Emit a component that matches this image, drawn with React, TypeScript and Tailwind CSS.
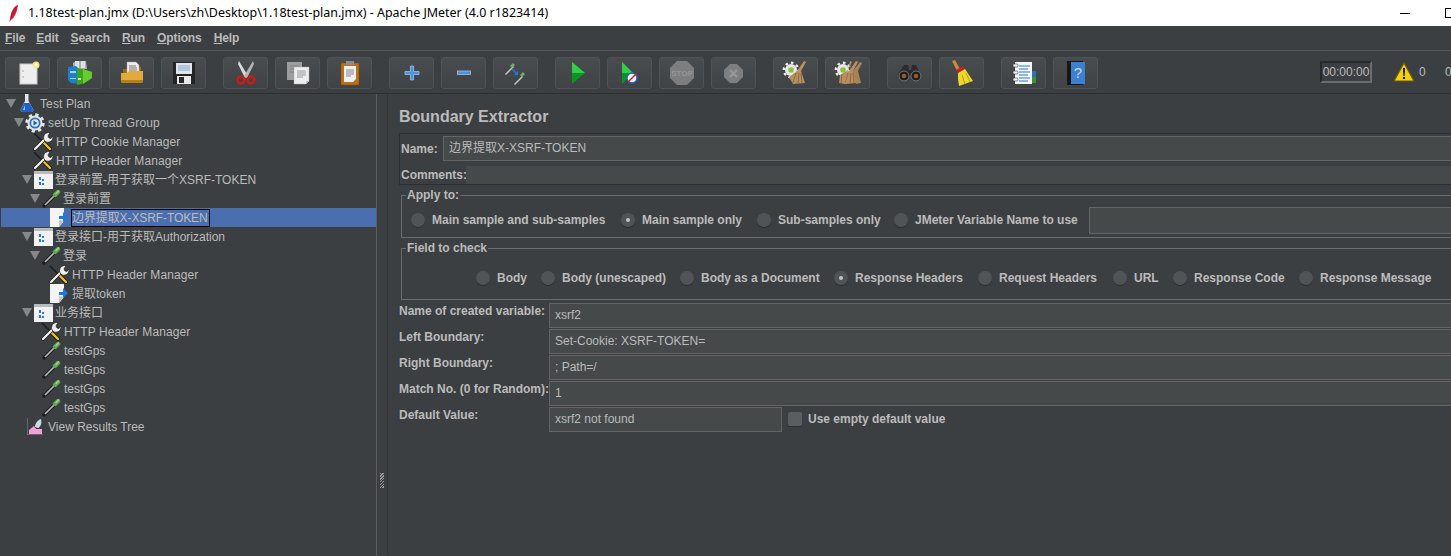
import React from 'react';

const FONT = "font-['Liberation_Sans','Noto_Sans_CJK_SC',sans-serif]";

// ---------- toolbar icons ----------
const NewIcon = () => (
  <svg width="24" height="24" viewBox="0 0 24 24">
    <rect x="4" y="3" width="17" height="20" fill="#eeeeee" stroke="#c9c9c9" />
    <circle cx="7" cy="10" r="0.8" fill="#999" />
    <circle cx="7" cy="16" r="0.8" fill="#999" />
    <circle cx="20" cy="4" r="3.500" fill="#f4e58a" />
    <circle cx="20" cy="4" r="1.800" fill="#fff8d0" />
  </svg>
);

const TemplatesIcon = () => (
  <svg width="26" height="26" viewBox="0 0 26 26">
    <path d="M6 3l3-2h10l1 8H6z" fill="#aab0b3" />
    <path d="M8 1h4v7H8zM14 1h4v7h-4z" fill="#dfe2e3" />
    <path d="M1 7l8-1 3 3v15l-8-1-3-3z" fill="#1f7fc4" />
    <path d="M3 11h6v2H3zM3 18h6v1H3z" fill="#9ad0f0" />
    <path d="M10 8l5 1 10 3-1 6-9 6-5 1z" fill="#3fa31c" />
    <path d="M16 9l9 3v6l-9 6z" fill="#66cc2e" />
    <path d="M11 18h3v2h-3z" fill="#c4e8a8" />
  </svg>
);

const OpenIcon = () => (
  <svg width="24" height="24" viewBox="0 0 24 24">
    <path d="M3 8h5l1-2h12v14H3z" fill="#9a6a10" />
    <path d="M7 1h9l3 3v10H7z" fill="#ececec" stroke="#aaa" strokeWidth="0.5" />
    <path d="M9 5h7M9 7h8M9 9h8" stroke="#777" />
    <path d="M1 12h6l2-2h14v10a2 2 0 0 1-2 2H3a2 2 0 0 1-2-2z" fill="#e3a93a" />
    <path d="M1 19h22v1a2 2 0 0 1-2 2H3a2 2 0 0 1-2-2z" fill="#b87f16" />
  </svg>
);

const SaveIcon = () => (
  <svg width="24" height="24" viewBox="0 0 24 24">
    <path d="M1 1h22v22H1z" fill="#242424" />
    <rect x="4" y="2" width="16" height="11" fill="#dfe6ef" />
    <path d="M6 5h12M6 7h12M6 9h12" stroke="#8ea7c4" />
    <rect x="5" y="15" width="14" height="8" fill="#e8e8e8" />
    <rect x="7" y="16" width="5" height="6" fill="#2a2a2a" />
  </svg>
);

const CutIcon = () => (
  <svg width="24" height="26" viewBox="0 0 24 26">
    <path d="M5 1l9 15-3 2L4 4z" fill="#dcdcdc" />
    <path d="M19 1l-9 15 3 2 7-14z" fill="#b5b5b5" />
    <circle cx="7" cy="20" r="3.500" fill="none" stroke="#d01818" strokeWidth="2.400" />
    <circle cx="17" cy="20" r="3.500" fill="none" stroke="#d01818" strokeWidth="2.400" />
  </svg>
);

const CopyIcon = () => (
  <svg width="24" height="24" viewBox="0 0 24 24">
    <rect x="1" y="1" width="15" height="18" fill="#9b9d9e" />
    <path d="M4 5h9M4 8h9M4 11h9" stroke="#808283" />
    <path d="M8 6h15v14l-3 3H8z" fill="#eeeeee" stroke="#a8a8a8" strokeWidth="0.5" />
    <path d="M11 10h9M11 12h9M11 14h9M11 16h6" stroke="#999" />
    <path d="M20 23v-3h3z" fill="#bbb" />
  </svg>
);

const PasteIcon = () => (
  <svg width="24" height="26" viewBox="0 0 24 26">
    <rect x="3" y="3" width="18" height="22" fill="#b8711a" stroke="#7d4a0c" strokeWidth="0.5" />
    <path d="M6 6h12v13l-3 3H6z" fill="#f0f0f0" />
    <path d="M8 10h8M8 12h8M8 14h8M8 16h5" stroke="#888" />
    <rect x="8" y="1" width="8" height="4" fill="#8c8c8c" />
  </svg>
);

const PlusIcon = () => (
  <svg width="16" height="16" viewBox="0 0 16 16">
    <path d="M6.500 1h3v5.500H15v3H9.500V15h-3V9.500H1v-3h5.500z" fill="#4a90dc" stroke="#a9cdf2" strokeWidth="0.7" />
  </svg>
);

const MinusIcon = () => (
  <svg width="16" height="16" viewBox="0 0 16 16">
    <rect x="1.500" y="6" width="13" height="3.500" fill="#4a90dc" stroke="#a9cdf2" strokeWidth="0.7" />
  </svg>
);

const ToggleIcon = () => (
  <svg width="24" height="24" viewBox="0 0 24 24">
    <path d="M1 13l8-8 1 1-8 8z" fill="#c9c9c9" />
    <path d="M6 5l3-3 2 2-3 3z" fill="#6bb35a" />
    <path d="M11 24l-1-1 8-8 1 1z" fill="#c9c9c9" />
    <path d="M16 14l3-3 2 2-3 3z" fill="#6bb35a" />
    <path d="M8 8l5 5" stroke="#1d78e0" strokeWidth="1.500" />
    <path d="M14 10v4h-4z" fill="#1d78e0" />
  </svg>
);

const RunIcon = () => (
  <svg width="14" height="22" viewBox="0 0 14 22">
    <path d="M1 0l13 11L1 22z" fill="#0c9420" />
    <path d="M1 0l13 11H1z" fill="#2fd048" />
  </svg>
);

const RunNoPauseIcon = () => (
  <svg width="16" height="22" viewBox="0 0 16 22">
    <path d="M0 0l11 11L0 22z" fill="#0c9420" />
    <path d="M0 0l11 11H0z" fill="#2fd048" />
    <circle cx="10" cy="16" r="5" fill="#f4f4f4" stroke="#1c62c6" strokeWidth="1.300" />
    <path d="M6 20l8-8" stroke="#d02020" strokeWidth="1.500" />
  </svg>
);

const StopIcon = () => (
  <svg width="24" height="24" viewBox="0 0 24 24">
    <path d="M7 0h10l7 7v10l-7 7H7l-7-7V7z" fill="#7c7e7f" />
    <text x="12" y="15" textAnchor="middle" fontSize="8" fontWeight="700" fill="#949697" fontFamily="Liberation Sans, sans-serif">STOP</text>
  </svg>
);

const ShutdownIcon = () => (
  <svg width="19" height="19" viewBox="0 0 19 19">
    <path d="M6 0h7l6 6v7l-6 6H6l-6-6V6z" fill="#7c7e7f" />
    <path d="M6 6l7 7M13 6l-7 7" stroke="#979999" strokeWidth="2.400" />
  </svg>
);

const ClearIcon = ({ all }: { all?: boolean }) => (
  <svg width="28" height="26" viewBox="0 0 28 26">
    <circle cx="9" cy="10" r="6" fill="#e8e8e8" />
    <circle cx="9" cy="10" r="7.200" fill="none" stroke="#e8e8e8" strokeWidth="2.400" strokeDasharray="2.600 3" />
    <circle cx="9" cy="10" r="2.800" fill="#86c440" />
    <path d="M22 1l2 1-5 9 4 12-12 1-4-7 8-6z" fill="#b8905f" />
    <path d="M14 13l-3 10M17 13l-1 10M19 13l1 10" stroke="#8c6a44" />
    {all && (
      <>
        <path d="M16 1l2 1-4 8-8 5-1 8 6 1 2-9z" fill="#b8905f" />
        <path d="M26 2l2 1-4 8 3 12-5 1-3-13z" fill="#a98255" />
        <path d="M8 14l-1 9" stroke="#8c6a44" />
      </>
    )}
  </svg>
);

const BinocularsIcon = () => (
  <svg width="24" height="18" viewBox="0 0 24 18">
    <path d="M6 1h4l1 5h2l1-5h4l5 11-5 5-6-5h-2l-6 5-5-5z" fill="#2b2b2b" />
    <circle cx="6" cy="12" r="5" fill="#1d1d1d" stroke="#777" />
    <circle cx="18" cy="12" r="5" fill="#1d1d1d" stroke="#777" />
    <circle cx="6" cy="12" r="2.300" fill="#9a5a2a" />
    <circle cx="18" cy="12" r="2.300" fill="#9a5a2a" />
  </svg>
);

const BroomIcon = () => (
  <svg width="24" height="26" viewBox="0 0 24 26">
    <path d="M2 1l3-1 5 9-3 2z" fill="#c58a3a" />
    <path d="M6 10l7-4 2 3-7 4z" fill="#cf1d1d" />
    <path d="M8 13l7-4 8 12-14 5-1-7z" fill="#ecd72c" />
    <path d="M12 15l3 9M16 13l4 9" stroke="#b8a41a" />
  </svg>
);

const ListIcon = () => (
  <svg width="24" height="24" viewBox="0 0 24 24">
    <rect x="19" y="10" width="5" height="6" fill="#2a6fc0" />
    <rect x="19" y="16" width="5" height="6" fill="#2f9a30" />
    <rect x="3" y="1" width="17" height="22" fill="#f6f6f6" />
    <path d="M7 5h11M7 8h9M7 11h11M7 14h9M7 17h11M7 20h9" stroke="#2a7ad8" />
    <rect x="1" y="3" width="5" height="3" rx="1" fill="#f0f0f0" stroke="#222" strokeWidth="0.5" />
    <rect x="1" y="10" width="5" height="3" rx="1" fill="#f0f0f0" stroke="#222" strokeWidth="0.5" />
    <rect x="1" y="17" width="5" height="3" rx="1" fill="#f0f0f0" stroke="#222" strokeWidth="0.5" />
  </svg>
);

const HelpIcon = () => (
  <svg width="18" height="24" viewBox="0 0 18 24">
    <rect x="0" y="0" width="16" height="24" fill="#161616" />
    <rect x="4" y="1" width="14" height="22" fill="#3f7fd0" />
    <text x="11" y="17" textAnchor="middle" fontSize="15" fill="#c8dcf4" fontFamily="Liberation Sans, sans-serif">?</text>
  </svg>
);

// ---------- tree icons ----------
const FlaskIcon = () => (
  <svg width="14" height="18" viewBox="0 0 14 18" className="-mt-[2px]">
    <path d="M5 0h3.500v7l5 9-1 2H1.500l-1-2 4.500-9z" fill="#e4e8ec" />
    <path d="M4 9h5.500l4 7-1 2H1.500l-1-2z" fill="#1f63c8" />
    <path d="M5 11l-2 5h2z" fill="#9cc4f0" />
  </svg>
);

const GearIcon = () => (
  <svg width="20" height="20" viewBox="0 0 20 20">
    <circle cx="10" cy="10" r="7.500" fill="#e4e4e4" />
    <circle cx="10" cy="10" r="8.200" fill="none" stroke="#e4e4e4" strokeWidth="3" strokeDasharray="3.200 3.240" />
    <circle cx="10" cy="10" r="5.500" fill="#2f6fb8" />
    <circle cx="10" cy="10" r="3.800" fill="#dce8f4" />
    <path d="M8.500 7.500l4 2.500-4 2.500z" fill="#2257a5" />
  </svg>
);

const WrenchIcon = () => (
  <svg width="20" height="19" viewBox="0 0 20 19">
    <path d="M1 1l9 9" stroke="#1c1c1c" strokeWidth="1.600" />
    <path d="M10 10l7 7" stroke="#1c1c1c" strokeWidth="4" strokeLinecap="round" />
    <path d="M10 10l7 7" stroke="#f0c419" strokeWidth="2.400" strokeLinecap="round" />
    <path d="M2 17L13 6" stroke="#1c1c1c" strokeWidth="3.800" strokeLinecap="round" />
    <path d="M2 17L13 6" stroke="#eeeeee" strokeWidth="2.300" strokeLinecap="round" />
    <path d="M11 8c-1.500-4 1-8 6-7.500l-2 3.500 1 2 2 .5 2-2.500c.5 4.500-3 7-7 6z" fill="#eeeeee" stroke="#1c1c1c" strokeWidth="0.7" />
  </svg>
);

const ThreadIcon = () => (
  <svg width="19" height="18" viewBox="0 0 19 18">
    <rect x="0" y="0" width="19" height="18" fill="#f2f2f2" />
    <rect x="0" y="0" width="19" height="3" fill="#b9bbbd" />
    <path d="M5 6h2v3H5zM5 11h2v3H5zM8 8h2v2H8zM8 12h2v2H8z" fill="#2a78d0" />
  </svg>
);

const DropperIcon = () => (
  <svg width="19" height="19" viewBox="0 0 19 19">
    <path d="M1 18l11-11" stroke="#1c1c1c" strokeWidth="3.400" />
    <path d="M3 16l9-9" stroke="#b8b8b8" strokeWidth="1.700" />
    <path d="M13 6l3-3" stroke="#62a852" strokeWidth="4.400" strokeLinecap="round" />
    <path d="M14 4.500l2.500-2.500" stroke="#a0d88c" strokeWidth="1.300" strokeLinecap="round" />
  </svg>
);

const ExtractIcon = () => (
  <svg width="19" height="19" viewBox="0 0 19 19">
    <path d="M0 0h14v13l-5 6H0z" fill="#f4f4f4" />
    <path d="M9 19l5-6-5-1z" fill="#c4c4c4" />
    <path d="M9 8h4V4l5 5-5 5v-3H9z" fill="#1c78e0" />
  </svg>
);

const ResultsIcon = () => (
  <svg width="16" height="17" viewBox="0 0 16 17">
    <path d="M0 0v17h16" fill="none" stroke="#8f8f8f" />
    <path d="M2 16v-4l5-4 2 3h6v5z" fill="#f2a0d8" />
    <path d="M8 9c0-4 3-7 6-8 1 3 0 8-3 9z" fill="#cfd8e8" />
  </svg>
);

const Arrow = () => (
  <svg width="10" height="9" viewBox="0 0 10 9">
    <path d="M0 0h10L5 9z" fill="#85888a" />
  </svg>
);

// ---------- data ----------
const groups: { icon: React.ReactNode }[][] = [
  [{ icon: <NewIcon /> }, { icon: <TemplatesIcon /> }, { icon: <OpenIcon /> }, { icon: <SaveIcon /> }],
  [{ icon: <CutIcon /> }, { icon: <CopyIcon /> }, { icon: <PasteIcon /> }],
  [{ icon: <PlusIcon /> }, { icon: <MinusIcon /> }, { icon: <ToggleIcon /> }],
  [{ icon: <RunIcon /> }, { icon: <RunNoPauseIcon /> }, { icon: <StopIcon /> }, { icon: <ShutdownIcon /> }],
  [{ icon: <ClearIcon /> }, { icon: <ClearIcon all /> }],
  [{ icon: <BinocularsIcon /> }, { icon: <BroomIcon /> }],
  [{ icon: <ListIcon /> }, { icon: <HelpIcon /> }],
];

const depthPad = ['pl-[5px]', 'pl-[13px]', 'pl-[21px]', 'pl-[29px]', 'pl-[37px]'];

const tree: {
  depth: number;
  open?: boolean;
  icon: React.ReactNode;
  label: string;
  extra?: string;
  selected?: boolean;
}[] = [
  { depth: 0, open: true, icon: <FlaskIcon />, label: 'Test Plan', extra: 'tracking-[0.12px]' },
  { depth: 1, open: true, icon: <GearIcon />, label: 'setUp Thread Group', extra: 'tracking-[0.15px]' },
  { depth: 2, icon: <WrenchIcon />, label: 'HTTP Cookie Manager', extra: 'tracking-[0.1px]' },
  { depth: 2, icon: <WrenchIcon />, label: 'HTTP Header Manager', extra: 'tracking-[0.1px]' },
  { depth: 2, open: true, icon: <ThreadIcon />, label: '登录前置-用于获取一个XSRF-TOKEN', extra: '-ml-px' },
  { depth: 3, open: true, icon: <DropperIcon />, label: '登录前置', extra: '-ml-px' },
  { depth: 4, icon: <ExtractIcon />, label: '边界提取X-XSRF-TOKEN', extra: '-ml-px tracking-[-0.1px]', selected: true },
  { depth: 2, open: true, icon: <ThreadIcon />, label: '登录接口-用于获取Authorization', extra: '-ml-px' },
  { depth: 3, open: true, icon: <DropperIcon />, label: '登录', extra: '-ml-px' },
  { depth: 4, icon: <WrenchIcon />, label: 'HTTP Header Manager', extra: 'tracking-[0.1px]' },
  { depth: 4, icon: <ExtractIcon />, label: '提取token' },
  { depth: 2, open: true, icon: <ThreadIcon />, label: '业务接口', extra: '-ml-px' },
  { depth: 3, icon: <WrenchIcon />, label: 'HTTP Header Manager', extra: 'tracking-[0.1px]' },
  { depth: 3, icon: <DropperIcon />, label: 'testGps' },
  { depth: 3, icon: <DropperIcon />, label: 'testGps' },
  { depth: 3, icon: <DropperIcon />, label: 'testGps' },
  { depth: 3, icon: <DropperIcon />, label: 'testGps' },
  { depth: 1, icon: <ResultsIcon />, label: 'View Results Tree' },
];

const applyTo = [
  { label: 'Main sample and sub-samples', w: 'mb-[2px] w-[210px]' },
  { label: 'Main sample only', w: 'mb-[2px] w-[136px]', on: true },
  { label: 'Sub-samples only', w: 'mb-[2px] w-[137px]' },
  { label: 'JMeter Variable Name to use', w: 'mb-[2px] w-[195px]' },
];

const fieldCheck = [
  { label: 'Body', w: 'w-[65px]' },
  { label: 'Body (unescaped)', w: 'w-[139px]' },
  { label: 'Body as a Document', w: 'w-[154px]' },
  { label: 'Response Headers', w: 'w-[144px]', on: true },
  { label: 'Request Headers', w: 'w-[135px]' },
  { label: 'URL', w: 'w-[60px]' },
  { label: 'Response Code', w: 'w-[126px]' },
  { label: 'Response Message', w: 'w-[150px]' },
];

const rows = [
  { label: 'Name of created variable:', value: 'xsrf2' },
  { label: 'Left Boundary:', value: 'Set-Cookie: XSRF-TOKEN=' },
  { label: 'Right Boundary:', value: '; Path=/' },
  { label: 'Match No. (0 for Random):', value: '1' },
];

const Radio = ({ label, w, on }: { label: string; w: string; on?: boolean }) => (
  <div className={`flex shrink-0 items-center gap-[7px] ${w}`}>
    <span className="flex h-[14px] w-[14px] shrink-0 items-center justify-center rounded-full bg-[#505456] shadow-[0_1px_0_#2b2d2e]">
      {on && <span className="h-[4px] w-[4px] rounded-full bg-[#c4c4c4]" />}
    </span>
    <span className="whitespace-nowrap text-[12px] font-bold text-[#bbbbbb]">{label}</span>
  </div>
);

const Field = ({ value, className }: { value: string; className: string }) => (
  <div className={`flex items-center border border-[#646464] bg-[#45494a] pb-[2px] pl-[5px] text-[12px] text-[#bbbbbb] ${className}`}>
    {value}
  </div>
);

export default function App() {
  return (
    <div className={`flex h-[556px] w-[1451px] flex-col overflow-hidden bg-[#3c3f41] text-[12px] text-[#bbbbbb] ${FONT}`}>
      {/* window title */}
      <div className="flex h-[26px] shrink-0 items-center bg-white text-black">
        <svg className="ml-[9px] mr-[9px]" width="10" height="17" viewBox="0 0 10 17">
          <path d="M9 0C5 1 2 6 1 14l-1 3 2-2c4-3 6-8 7-15z" fill="#d3203a" />
          <path d="M8 1C6 4 4 7 2 13" stroke="#7a1222" strokeWidth="0.6" fill="none" />
        </svg>
        <span className="whitespace-nowrap font-['Noto_Sans','Noto_Sans_CJK_SC',sans-serif] text-[12.45px] leading-none">
          1.18test-plan.jmx (D:\Users\zh\Desktop\1.18test-plan.jmx) - Apache JMeter (4.0 r1823414)
        </span>
        <div className="ml-auto flex items-center">
          <span className="mr-[35px] h-px w-[10px] bg-black" />
          <span className="-mr-[4px] h-[10px] w-[10px] border border-black" />
        </div>
      </div>

      {/* menu */}
      <div className="flex h-[24px] shrink-0 items-center gap-[12px] pl-[5px] text-[12px] font-bold tracking-[-0.1px]">
        {['File', 'Edit', 'Search', 'Run', 'Options', 'Help'].map((m) => (
          <span key={m} className={m === 'File' ? '-mr-px' : ''}>
            <span className="underline underline-offset-1">{m[0]}</span>
            {m.slice(1)}
          </span>
        ))}
      </div>

      {/* toolbar */}
      <div className="flex h-[44px] shrink-0 items-start border-y border-t-[#555759] border-b-[#2d2f30] pl-[5px] pt-[6px]">
        <div className="flex gap-[17px]">
          {groups.map((group, i) => (
            <div key={i} className="flex gap-[7px]">
              {group.map((b, j) => (
                <div
                  key={j}
                  className="flex h-[32px] w-[45px] items-center justify-center rounded-[3px] border border-[#505355] bg-gradient-to-b from-[#484c4e] to-[#3f4345]"
                >
                  {b.icon}
                </div>
              ))}
            </div>
          ))}
        </div>
        <div className="ml-auto mt-[4px] flex items-center">
          <div className="flex h-[22px] w-[52px] items-center justify-center border-2 border-t-[#26282a] border-l-[#26282a] border-b-[#6a6c6e] border-r-[#6a6c6e] text-[12px]">
            00:00:00
          </div>
          <svg className="ml-[21px]" width="22" height="20" viewBox="0 0 22 20">
            <path d="M11 1l10 18H1z" fill="#f4cf0c" stroke="#6b5a0a" strokeWidth="1.200" />
            <path d="M10 6h2l-.4 8h-1.200z" fill="#111" />
            <rect x="10" y="15" width="2" height="2" fill="#111" />
          </svg>
          <span className="ml-[4px] w-[26px]">0</span>
          <span className="w-[6px] overflow-hidden">0</span>
        </div>
      </div>

      {/* main area */}
      <div className="flex min-h-0 flex-1">
        {/* tree */}
        <div className="w-[377px] shrink-0 border-r border-[#5a5c5e] pl-px">
          {tree.map((n, i) => (
            <div
              key={i}
              className={`flex h-[19px] items-center ${depthPad[n.depth]} ${n.selected ? 'bg-[#4b6eaf]' : ''}`}
            >
              <span className="flex w-[10px] shrink-0 justify-center">{n.open && <Arrow />}</span>
              <span className="ml-[1px] mr-[3px] flex w-[20px] shrink-0 justify-center">{n.icon}</span>
              <span
                className={`whitespace-nowrap leading-none ${n.extra ?? ''} ${
                  n.selected ? 'flex h-[18px] items-center border border-black bg-[#4b6eaf] pr-px' : ''
                }`}
              >
                {n.label}
              </span>
            </div>
          ))}
        </div>

        {/* divider */}
        <div className="flex w-[11px] shrink-0 items-start justify-center border-r border-[#2f3133] pt-[379px]">
          <span className="h-[15px] w-[4px] bg-[repeating-linear-gradient(135deg,#9a9a9a_0,#9a9a9a_1px,#3c3f41_1px,#3c3f41_2px)]" />
        </div>

        {/* form */}
        <div className="min-w-0 flex-1 overflow-hidden pl-[11px]">
          <div className="w-[1100px]">
            <h1 className="flex h-[39px] items-center pt-[7px] text-[16px] font-bold">Boundary Extractor</h1>

            <div className="h-[52px] border border-[#2b2d2e] pl-px pt-[2px]">
              <div className="flex items-center">
                <span className="w-[42px] text-[12px] font-bold">Name:</span>
                <Field value="边界提取X-XSRF-TOKEN" className="h-[25px] flex-1" />
              </div>
              <div className="mt-[5px] flex items-center">
                <span className="w-[65px] text-[12px] font-bold">Comments:</span>
                <div className="h-[18px] flex-1 bg-[#45494a]" />
              </div>
            </div>

            <fieldset className="ml-[2px] mt-[3px] h-[50px] border border-[#6a6c6e]">
              <legend className="ml-[4px] px-px text-[12px] font-bold leading-[14px]">Apply to:</legend>
              <div className="mt-[5px] flex h-[27px] items-center pl-[9px]">
                {applyTo.map((r) => (
                  <Radio key={r.label} {...r} />
                ))}
                <div className="h-[27px] flex-1 border border-[#646464] bg-[#45494a]" />
              </div>
            </fieldset>

            <fieldset className="ml-[2px] mt-[3px] h-[59px] border border-[#6a6c6e]">
              <legend className="ml-[4px] px-px text-[12px] font-bold leading-[14px]">Field to check</legend>
              <div className="mt-[14px] flex items-center pl-[74px]">
                {fieldCheck.map((r) => (
                  <Radio key={r.label} {...r} />
                ))}
              </div>
            </fieldset>

            <div className="mt-[3px] flex flex-col gap-px">
              {rows.map((r) => (
                <div key={r.label} className="flex h-[25px]">
                  <span className="w-[150px] shrink-0 text-[12px] font-bold leading-[16px]">{r.label}</span>
                  <Field value={r.value} className="flex-1" />
                </div>
              ))}
              <div className="flex h-[25px]">
                <span className="w-[150px] shrink-0 text-[12px] font-bold leading-[16px]">Default Value:</span>
                <Field value="xsrf2 not found" className="w-[233px]" />
                <span className="ml-[6px] mt-[5px] h-[14px] w-[14px] rounded-[2px] bg-[#5a5e60] shadow-[0_1px_0_#2b2d2e]" />
                <span className="ml-[6px] flex items-center pb-[2px] text-[12px] font-bold">Use empty default value</span>
              </div>
            </div>
          </div>
        </div>
      </div>
    </div>
  );
}
